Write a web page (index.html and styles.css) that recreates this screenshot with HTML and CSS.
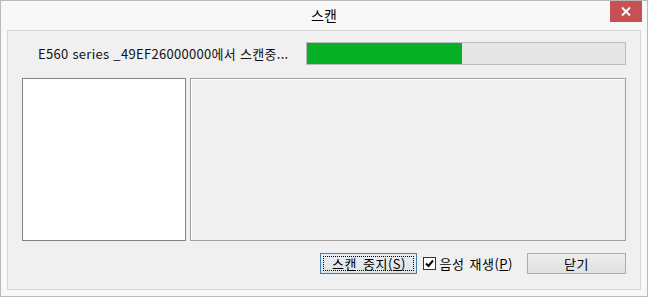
FILE: index.html
```html
<!DOCTYPE html>
<html lang="ko">
<head>
<meta charset="utf-8">
<link rel="stylesheet" href="styles.css">
</head>
<body>
<div class="window">
  <div class="titlebar">
    <span class="title">스캔</span>
    <button class="close" aria-label="닫기">
      <svg width="10" height="9" viewBox="0 0 10 9"><path d="M1 0.5 L9 8.5 M9 0.5 L1 8.5" stroke="#fff" stroke-width="2"/></svg>
    </button>
  </div>
  <div class="panel">
    <div class="status-row">
      <span class="status">E560 series _49EF26000000에서 스캔중...</span>
      <div class="progress"><div class="fill" style="width:155px"></div></div>
    </div>
    <div class="boxes">
      <div class="preview"></div>
      <div class="area"></div>
    </div>
    <div class="actions">
      <button class="btn focused"><span class="focus-ring">스캔 중지(<u>S</u>)</span></button>
      <label class="check">
        <span class="box"><svg width="9" height="9" viewBox="0 0 9 9"><path d="M1 4.5 L3.5 7 L8 1.5" fill="none" stroke="#000" stroke-width="2"/></svg></span>
        <span class="check-label">음성 재생(<u>P</u>)</span>
      </label>
      <button class="btn close-btn">닫기</button>
    </div>
  </div>
</div>
</body>
</html>
```
FILE: styles.css
```css
* { box-sizing: border-box; }
html, body { margin: 0; padding: 0; background: #fff; }
body { font-family: "Noto Sans CJK KR", "Noto Sans", sans-serif; font-size: 13px; color: #000; }

.window {
  width: 648px;
  height: 297px;
  border: 1px solid #b9b9b9;
  background: #f8f8f8;
  display: flex;
  flex-direction: column;
}

.titlebar {
  height: 29px;
  position: relative;
  display: flex;
  justify-content: center;
  align-items: center;
}
.title { font-size: 14px; color: #000; margin-top: -2px; }
.close {
  position: absolute;
  top: 0;
  left: 609px;
  width: 32px;
  height: 21px;
  border: 0;
  padding: 0;
  background: #c75050;
  display: flex;
  align-items: center;
  justify-content: center;
}

.panel {
  flex: 1;
  margin: 0 6px 6px 6px;
  border: 1px solid #d6d6d6;
  background: #f0f0f0;
  padding: 11px 14px 0 14px;
  display: flex;
  flex-direction: column;
}

.status-row {
  height: 23px;
  display: flex;
  align-items: center;
}
.status { margin-left: 16px; white-space: nowrap; letter-spacing: 0.3px; color: #111; }
.progress {
  margin-left: auto;
  width: 320px;
  height: 23px;
  border: 1px solid #bcbcbc;
  background: #e6e6e6;
}
.fill { height: 100%; background: #06b025; }

.boxes {
  margin-top: 13px;
  height: 163px;
  display: flex;
  gap: 4px;
}
.preview {
  width: 164px;
  border: 1px solid #828282;
  background: #fff;
}
.area {
  flex: 1;
  border: 1px solid #a0a0a0;
  background: #f0f0f0;
  box-shadow: inset 1px 1px 0 #fff;
}

.actions {
  margin-top: 12px;
  height: 21px;
  display: flex;
  align-items: center;
  justify-content: flex-end;
}
.btn {
  font-family: inherit;
  font-size: 13px;
  height: 21px;
  padding: 0;
  border: 1px solid #acacac;
  background: linear-gradient(#ececec, #e1e1e1);
  color: #000;
  display: flex;
  align-items: center;
  justify-content: center;
}
.btn.focused {
  width: 97px;
  border-color: #3c7fb1;
  background: linear-gradient(#e8eef4, #dde4ea);
  padding: 2px;
}
.focus-ring {
  width: 100%;
  height: 100%;
  border: 1px dotted #000;
  display: flex;
  align-items: center;
  justify-content: center;
  line-height: 1;
  letter-spacing: 0.5px;
  word-spacing: 2px;
}
.check {
  margin-left: 6px;
  display: flex;
  align-items: center;
  gap: 3px;
  white-space: nowrap;
}
.check-label { letter-spacing: 0.5px; word-spacing: 1px; }
.box {
  width: 13px;
  height: 13px;
  border: 1px solid #333;
  background: #fff;
  display: flex;
  align-items: center;
  justify-content: center;
}
.close-btn { margin-left: 14px; width: 99px; letter-spacing: 0.5px; }
u { text-decoration: underline; text-underline-offset: 1px; }
```
